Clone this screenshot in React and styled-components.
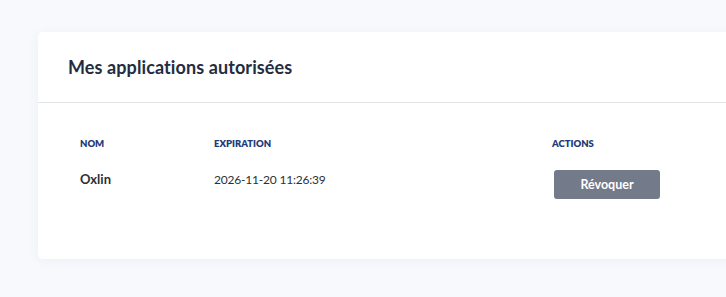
import React from 'react';
import styled, { createGlobalStyle } from 'styled-components';

const GlobalStyle = createGlobalStyle`
  html, body {
    margin: 0;
    padding: 0;
    background: #f8f9fd;
    font-family: Lato, "Open Sans", "Liberation Sans", sans-serif;
    -webkit-font-smoothing: antialiased;
  }
`

const Page = styled.div`
  padding: 32px 0 0 38px;
  height: 297px;
  box-sizing: border-box;
  overflow: hidden;
`
const Card = styled.div`
  width: 720px;
  height: 227px;
  background: #fff;
  border-radius: 5px 0 0 5px;
  box-shadow: 0 2px 12px rgba(40, 50, 90, 0.05);
`
const CardHeader = styled.div`
  height: 71px;
  box-sizing: border-box;
  padding: 0 30px;
  display: flex;
  align-items: center;
  border-bottom: 1px solid #e2e4e8;
`
const Title = styled.h2`
  margin: 0;
  font-size: 18px;
  font-weight: 700;
  letter-spacing: 0.1px;
  color: #242d3f;
`
const CardBody = styled.div`
  padding: 29px 30px 0;
`
const Table = styled.table`
  border-collapse: collapse;
  width: 100%;
`
const Th = styled.th`
  text-align: left;
  padding: 0 12px;
  height: 22px;
  font-size: 9.5px;
  font-weight: 800;
  text-transform: uppercase;
  color: #1f3b7a;
  width: ${p => p.$width || 'auto'};
`
const Td = styled.td`
  padding: 0 12px;
  height: 50px;
  font-size: ${p => (p.$bold ? '13px' : '12px')};
  letter-spacing: ${p => (p.$bold ? '0' : '-0.2px')};
  color: #2c2f36;
  font-weight: ${p => (p.$bold ? 700 : 400)};
`
const RevokeButton = styled.button`
  margin: 10px 0 0 2px;
  width: 106px;
  height: 29px;
  border: none;
  border-radius: 3px;
  background: #737a8a;
  color: #fff;
  font-family: inherit;
  font-size: 12.5px;
  font-weight: 700;
  cursor: pointer;
`

const apps = [{ name: 'Oxlin', expiration: '2026-11-20 11:26:39' }]

export default function App() {
  return (
    <Page>
      <GlobalStyle />
      <Card>
        <CardHeader>
          <Title>Mes applications autorisées</Title>
        </CardHeader>
        <CardBody>
          <Table>
            <thead>
              <tr>
                <Th $width="110px">Nom</Th>
                <Th $width="314px">Expiration</Th>
                <Th>Actions</Th>
              </tr>
            </thead>
            <tbody>
              {apps.map(app => (
                <tr key={app.name}>
                  <Td $bold>{app.name}</Td>
                  <Td>{app.expiration}</Td>
                  <Td><RevokeButton>Révoquer</RevokeButton></Td>
                </tr>
              ))}
            </tbody>
          </Table>
        </CardBody>
      </Card>
    </Page>
  )
}
